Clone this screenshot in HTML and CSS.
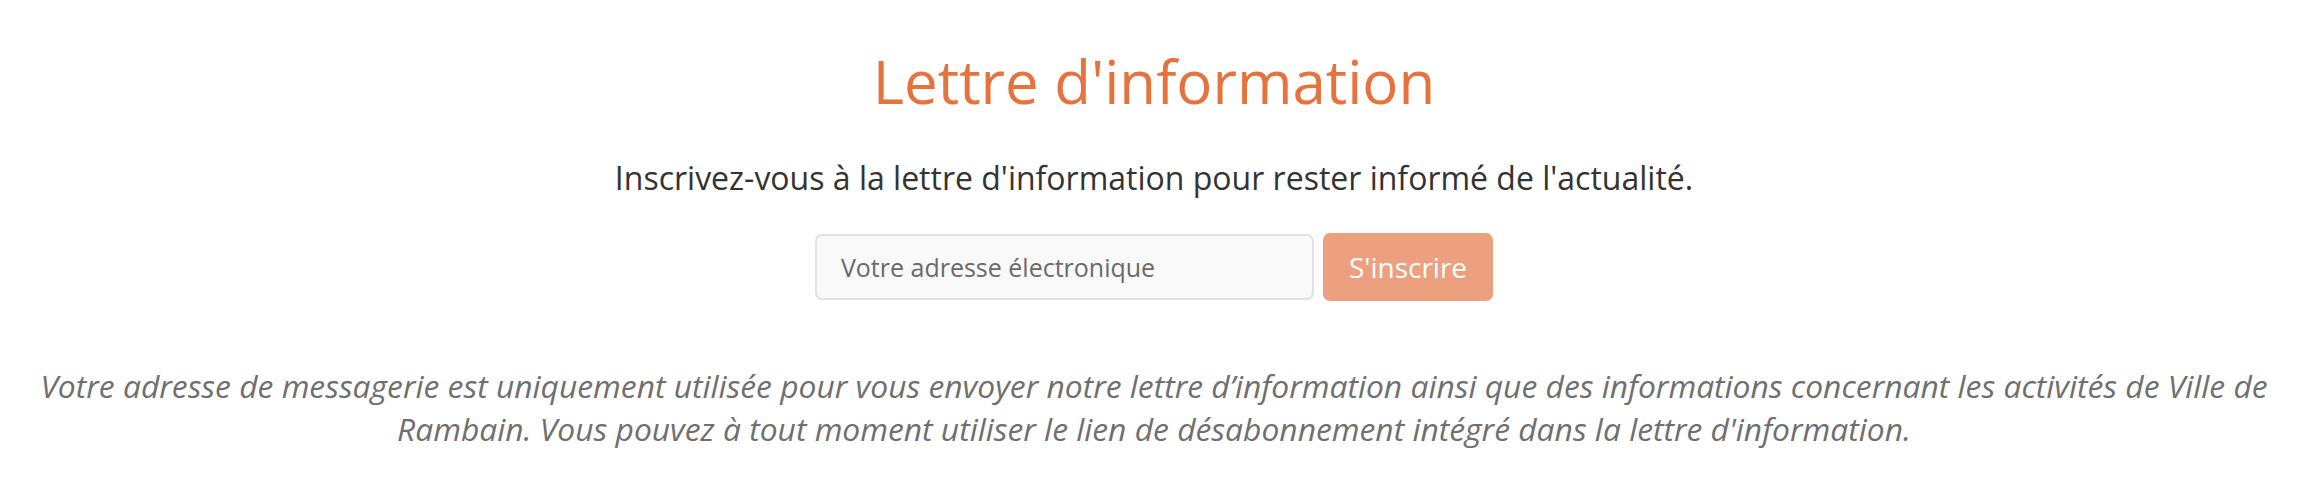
FILE: index.html
```html
<!DOCTYPE html>
<html lang="fr">
<head>
  <meta charset="UTF-8">
  <title>Lettre d'information</title>
  <meta name="viewport" content="width=device-width, initial-scale=1.0">
  <link rel="stylesheet" href="styles.css">
</head>
<body>
  <section class="newsletter">
    <h1 class="newsletter-title">Lettre d'information</h1>
    <p class="newsletter-intro">Inscrivez-vous à la lettre d'information pour rester informé de l'actualité.</p>
    <form class="newsletter-form" onsubmit="return false;">
      <input type="email" class="newsletter-input" placeholder="Votre adresse électronique">
      <button type="submit" class="newsletter-btn">S'inscrire</button>
    </form>
    <p class="newsletter-legal">Votre adresse de messagerie est uniquement utilisée pour vous envoyer notre lettre d’information ainsi que des informations concernant les activités de Ville de Rambain. Vous pouvez à tout moment utiliser le lien de désabonnement intégré dans la lettre d'information.</p>
  </section>
</body>
</html>
```

FILE: styles.css
```css
body {
  margin: 0;
  padding: 0;
  background: #fff;
  font-family: 'Open Sans', 'Noto Sans', sans-serif;
  color: #333;
}

.newsletter {
  text-align: center;
  padding: 45px 30px 0;
}

.newsletter-title {
  margin: 0;
  font-size: 60px;
  font-weight: 400;
  line-height: 1.2;
  color: #e6733e;
}

.newsletter-intro {
  margin: 37px 0 0;
  font-size: 32px;
  line-height: 48px;
  color: #333;
}

.newsletter-form {
  display: flex;
  justify-content: center;
  align-items: center;
  gap: 9px;
  margin-top: 31px;
}

.newsletter-input {
  box-sizing: border-box;
  width: 499px;
  height: 66px;
  padding: 0 24px;
  border: 2px solid #e2e2e2;
  border-radius: 7px;
  background: #f9f9f9;
  font-family: inherit;
  font-size: 25px;
  color: #333;
}

.newsletter-input::placeholder {
  color: #6a6a6a;
}

.newsletter-btn {
  box-sizing: border-box;
  height: 68px;
  padding: 0 26px;
  border: none;
  border-radius: 7px;
  background: #eca07f;
  font-family: inherit;
  font-size: 28px;
  color: #fff;
}

.newsletter-legal {
  margin: 63px 0 0;
  font-size: 31.8px;
  line-height: 43px;
  font-style: italic;
  color: #6f6f6f;
}
```
